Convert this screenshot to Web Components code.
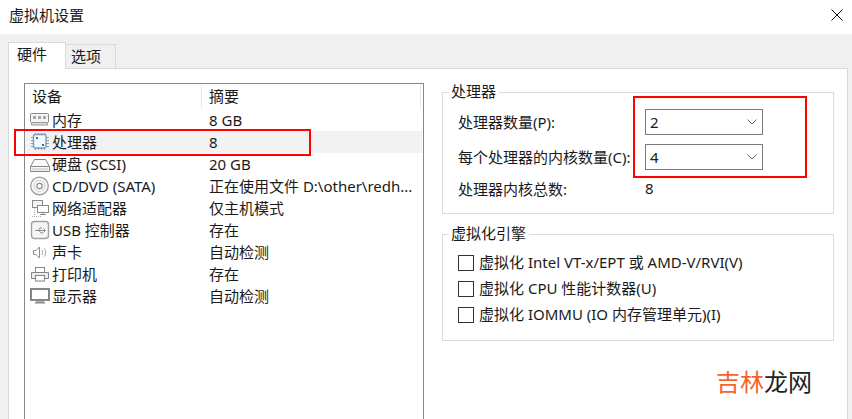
<!DOCTYPE html>
<html>

<head>
  <meta charset="utf-8">
  <title>虚拟机设置</title>
  <style>
    html, body { margin: 0; height: 100%; overflow: hidden; }
    body { width: 852px; height: 419px; background: #f0f0f0; color: #1a1a1a; font: 15px "Noto Sans", "Noto Sans CJK SC", sans-serif; }
  </style>
</head>

<body>
<vm-dialog heading="虚拟机设置">
  <vm-tab slot="tabs" selected>硬件</vm-tab>
  <vm-tab slot="tabs">选项</vm-tab>

  <device-list>
    <device-row icon="memory" summary="8 GB">内存</device-row>
    <device-row icon="cpu" summary="8" selected>处理器</device-row>
    <device-row icon="disk" summary="20 GB">硬盘 (SCSI)</device-row>
    <device-row icon="cd" summary="正在使用文件 D:\other\redh...">CD/DVD (SATA)</device-row>
    <device-row icon="network" summary="仅主机模式">网络适配器</device-row>
    <device-row icon="usb" summary="存在">USB 控制器</device-row>
    <device-row icon="sound" summary="自动检测">声卡</device-row>
    <device-row icon="printer" summary="存在">打印机</device-row>
    <device-row icon="display" summary="自动检测">显示器</device-row>
  </device-list>

  <div slot="side">
    <group-box legend="处理器" box-height="122">
      <processor-form></processor-form>
    </group-box>
    <group-box legend="虚拟化引擎" box-height="107" style="margin-top: 20px">
      <vm-check>虚拟化 Intel VT-x/EPT 或 AMD-V/RVI(V)</vm-check>
      <vm-check>虚拟化 CPU 性能计数器(U)</vm-check>
      <vm-check>虚拟化 IOMMU (IO 内存管理单元)(I)</vm-check>
    </group-box>
  </div>
</vm-dialog>

<red-mark x="14" y="129" w="297" h="27"></red-mark>
<red-mark x="633" y="96" w="174" h="82"></red-mark>
<site-mark></site-mark>

<script>
    const ICONS = {
        memory: `<rect x=".5" y="3.500" width="18" height="9" rx="1" fill="#f4f4f4" stroke="#8a8a8a"/>
          <path d="M3 6h3v3H3zM8 6h3v3H8zM13 6h3v3h-3z" fill="#a6a6a6"/>
          <path d="M1.500 12.500h16v2.500h-16z" fill="#dedede" stroke="#9a9a9a"/>`,
        cpu: `<path d="M5.500 1v3M8.500 1v3M11.500 1v3M14.500 1v3M5.500 15v3M8.500 15v3M11.500 15v3M14.500 15v3M1 5.500h3M1 8.500h3M1 11.500h3M1 14.500h3M15 5.500h4M15 8.500h4M15 11.500h4M15 14.500h4" stroke="#6fa8dc"/>
          <rect x="3.500" y="2.500" width="12.500" height="13.500" rx="1.500" fill="#f3f8fc" stroke="#7f98ad" stroke-width="1.300"/>
          <rect x="6" y="5" width="2" height="2" fill="#2a6fb0"/><rect x="12" y="12" width="2" height="2" fill="#2a6fb0"/>`,
        disk: `<path d="M4.500 5.500h11l4 7v5h-19v-5z" fill="#fbfbfb" stroke="#858585"/>
          <path d="M.5 12.500h19" stroke="#858585"/><path d="M2 14h16v2.500H2z" fill="#dcdcdc"/>`,
        cd: `<circle cx="9.500" cy="10" r="8.800" fill="#f5f5f5" stroke="#9a9a9a" stroke-width="1.200"/>
          <circle cx="9.500" cy="10" r="5.500" fill="none" stroke="#d2d2d2"/>
          <circle cx="9.500" cy="10" r="2.700" fill="#fff" stroke="#8a8a8a" stroke-width="1.200"/>`,
        network: `<rect x="2.500" y="2.500" width="10" height="7" fill="#f4f4f4" stroke="#8a8a8a"/>
          <rect x="7.500" y="7.500" width="11" height="7" fill="#fff" stroke="#8a8a8a"/>
          <path d="M13 15v1.500M10 16.500h6" stroke="#8a8a8a"/>
          <path d="M2 18.500h10M4.500 10v8" stroke="#b5b5b5" stroke-dasharray="1 1"/>`,
        usb: `<rect x="1.500" y="1.500" width="17" height="17" rx="3" fill="#f6f6f6" stroke="#a2a2a2" stroke-width="1.400"/>
          <path d="M5 10.500h10M13.500 8.500l2 2-2 2M8 10.500l2-2.500h2M9 10.500l2 2.500h2" fill="none" stroke="#8c8c8c"/>`,
        sound: `<path d="M3.500 8.500h2.500l3.500-3.500v11l-3.500-3.500H3.500z" fill="#fafafa" stroke="#8c8c8c"/>
          <path d="M12 8c.8 1.500.8 3.500 0 5M14.500 6.500c1.500 2.500 1.500 5.500 0 8" fill="none" stroke="#a0a0a0"/>`,
        printer: `<rect x="5.500" y="3.500" width="9" height="5" fill="#fff" stroke="#858585"/>
          <path d="M1.500 8.500h17v6h-17z" fill="#ececec" stroke="#858585"/>
          <rect x="5.500" y="11.500" width="9" height="5.500" fill="#fff" stroke="#858585"/>`,
        display: `<rect x="1" y="3" width="18" height="11" fill="#fff" stroke="#858585" stroke-width="2"/>
          <path d="M6 15h8v1H6z" fill="#b0b0b0"/><path d="M5 16h10v1.500H5z" fill="#8a8a8a"/>`
    };

    class VmDialog extends HTMLElement {
        constructor () {
            super();
            const shadowRoot = this.attachShadow({ mode: 'open' });
            shadowRoot.innerHTML = `
      <style>
        :host { display: block; height: 419px; overflow: hidden; }
        .titlebar { height: 34px; background: #fff; display: flex; align-items: center; justify-content: space-between; padding: 0 9px; box-sizing: border-box; }
        .titlebar span { position: relative; top: -3px; }
        .titlebar svg { display: block; margin: -5px 0 0; }
        .tabs { display: flex; align-items: flex-end; height: 25px; margin-top: 9px; padding-left: 8px; position: relative; z-index: 1; }
        .panel { margin: 0 4px 0 8px; height: 400px; background: #fff; border: 1px solid #d9d9d9; display: flex; box-sizing: border-box; padding: 14px 13px 0 15px; }
        .side { margin-left: 18px; padding-top: 9px; width: 392px; }
      </style>
      <div class="titlebar">
        <span>${this.getAttribute('heading')}</span>
        <svg width="12" height="12" viewBox="0 0 12 12"><path d="M.5.500l11 11M11.500.500l-11 11" stroke="#111" fill="none"/></svg>
      </div>
      <div class="tabs"><slot name="tabs"></slot></div>
      <div class="panel">
        <slot></slot>
        <div class="side"><slot name="side"></slot></div>
      </div>
    `;
        }
    }
    customElements.define('vm-dialog', VmDialog);

    class VmTab extends HTMLElement {
        constructor () {
            super();
            const shadowRoot = this.attachShadow({ mode: 'open' });
            shadowRoot.innerHTML = `
      <style>
        :host { display: block; box-sizing: border-box; height: 24px; width: 51px; margin-left: -1px; padding-left: 5px; line-height: 22px; background: #f0f0f0; border: 1px solid #d9d9d9; border-bottom: 0; }
        :host([selected]) { height: 27px; width: 58px; margin: 0 0 -1px 0; padding-left: 8px; line-height: 22px; background: #fff; z-index: 2; }
      </style>
      <slot></slot>
    `;
        }
    }
    customElements.define('vm-tab', VmTab);

    class DeviceList extends HTMLElement {
        constructor () {
            super();
            const shadowRoot = this.attachShadow({ mode: 'open' });
            shadowRoot.innerHTML = `
      <style>
        :host { display: block; box-sizing: border-box; width: 400px; height: 360px; flex: none; border: 1px solid #828790; background: #fff; }
        .head { display: grid; grid-template-columns: 177px 219px; height: 25px; line-height: 25px; }
        .head div { padding-left: 7px; box-sizing: border-box; }
        .head .sep { border-right: 1px solid #e5e5e5; margin: 1px 0 1px; line-height: 23px; }
      </style>
      <div class="head"><div class="sep">设备</div><div class="sep">摘要</div></div>
      <slot></slot>
    `;
        }
    }
    customElements.define('device-list', DeviceList);

    class DeviceRow extends HTMLElement {
        constructor () {
            super();
            const shadowRoot = this.attachShadow({ mode: 'open' });
            shadowRoot.innerHTML = `
      <style>
        :host { display: grid; grid-template-columns: 177px 220px; height: 22px; line-height: 22px; width: 397px; white-space: nowrap; }
        :host([selected]) { background: #f2f2f2; }
        .name { display: flex; align-items: center; padding-left: 5px; gap: 2px; }
        svg { display: block; flex: none; }
        .summary { padding-left: 7px; }
      </style>
      <div class="name">
        <svg width="20" height="20" viewBox="0 0 20 20" fill="none">${ICONS[this.getAttribute('icon')]}</svg>
        <slot></slot>
      </div>
      <div class="summary">${this.getAttribute('summary')}</div>
    `;
        }
    }
    customElements.define('device-row', DeviceRow);

    class GroupBox extends HTMLElement {
        constructor () {
            super();
            const shadowRoot = this.attachShadow({ mode: 'open' });
            shadowRoot.innerHTML = `
      <style>
        :host { display: block; box-sizing: border-box; height: ${this.getAttribute('box-height')}px; position: relative; border: 1px solid #dcdcdc; padding: 15px 16px 0 15px; }
        .legend { position: absolute; top: -12px; left: 6px; padding: 0 3px 0 2px; background: #fff; line-height: 20px; }
      </style>
      <div class="legend">${this.getAttribute('legend')}</div>
      <slot></slot>
    `;
        }
    }
    customElements.define('group-box', GroupBox);

    class ProcessorForm extends HTMLElement {
        constructor () {
            super();
            const shadowRoot = this.attachShadow({ mode: 'open' });
            shadowRoot.innerHTML = `
      <style>
        :host { display: grid; grid-template-columns: 187px 118px; grid-template-rows: 26px 26px 20px; row-gap: 9px; margin-top: 1px; align-items: center; white-space: nowrap; }
        .text { padding-bottom: 2px; }
      </style>
      <div class="text">处理器数量(P):</div><vm-select>2</vm-select>
      <div class="text">每个处理器的内核数量(C):</div><vm-select>4</vm-select>
      <div class="text">处理器内核总数:</div><div class="text">8</div>
    `;
        }
    }
    customElements.define('processor-form', ProcessorForm);

    class VmSelect extends HTMLElement {
        constructor () {
            super();
            const shadowRoot = this.attachShadow({ mode: 'open' });
            shadowRoot.innerHTML = `
      <style>
        :host { display: flex; box-sizing: border-box; height: 26px; align-items: center; justify-content: space-between; border: 1px solid #7a7a7a; padding: 0 5px 1px 4px; background: #fff; }
        svg { display: block; }
      </style>
      <slot></slot>
      <svg width="10" height="6" viewBox="0 0 10 6"><path d="M.5.500L5 5 9.500.500" fill="none" stroke="#666"/></svg>
    `;
        }
    }
    customElements.define('vm-select', VmSelect);

    class VmCheck extends HTMLElement {
        constructor () {
            super();
            const shadowRoot = this.attachShadow({ mode: 'open' });
            shadowRoot.innerHTML = `
      <style>
        :host { display: flex; align-items: center; height: 26px; gap: 5px; white-space: nowrap; }
        .box { box-sizing: border-box; width: 16px; height: 16px; border: 1px solid #333; background: #fff; flex: none; }
        .label { padding-bottom: 4px; }
      </style>
      <div class="box"></div><div class="label"><slot></slot></div>
    `;
        }
    }
    customElements.define('vm-check', VmCheck);

    // annotation rectangles drawn over the screenshot
    class RedMark extends HTMLElement {
        constructor () {
            super();
            const shadowRoot = this.attachShadow({ mode: 'open' });
            const get = (name) => this.getAttribute(name);
            shadowRoot.innerHTML = `
      <style>
        :host { display: block; box-sizing: border-box; position: absolute; left: ${get('x')}px; top: ${get('y')}px; width: ${get('w')}px; height: ${get('h')}px; border: 2px solid #f00; }
      </style>
    `;
        }
    }
    customElements.define('red-mark', RedMark);

    class SiteMark extends HTMLElement {
        constructor () {
            super();
            const shadowRoot = this.attachShadow({ mode: 'open' });
            shadowRoot.innerHTML = `
      <style>
        :host { display: block; position: absolute; left: 716px; top: 365px; font-size: 24px; line-height: 34px; color: #222; white-space: nowrap; }
        b { font-weight: 400; color: #f9612b; }
      </style>
      <b>吉林</b>龙网
    `;
        }
    }
    customElements.define('site-mark', SiteMark);
</script>

</body>

</html>
